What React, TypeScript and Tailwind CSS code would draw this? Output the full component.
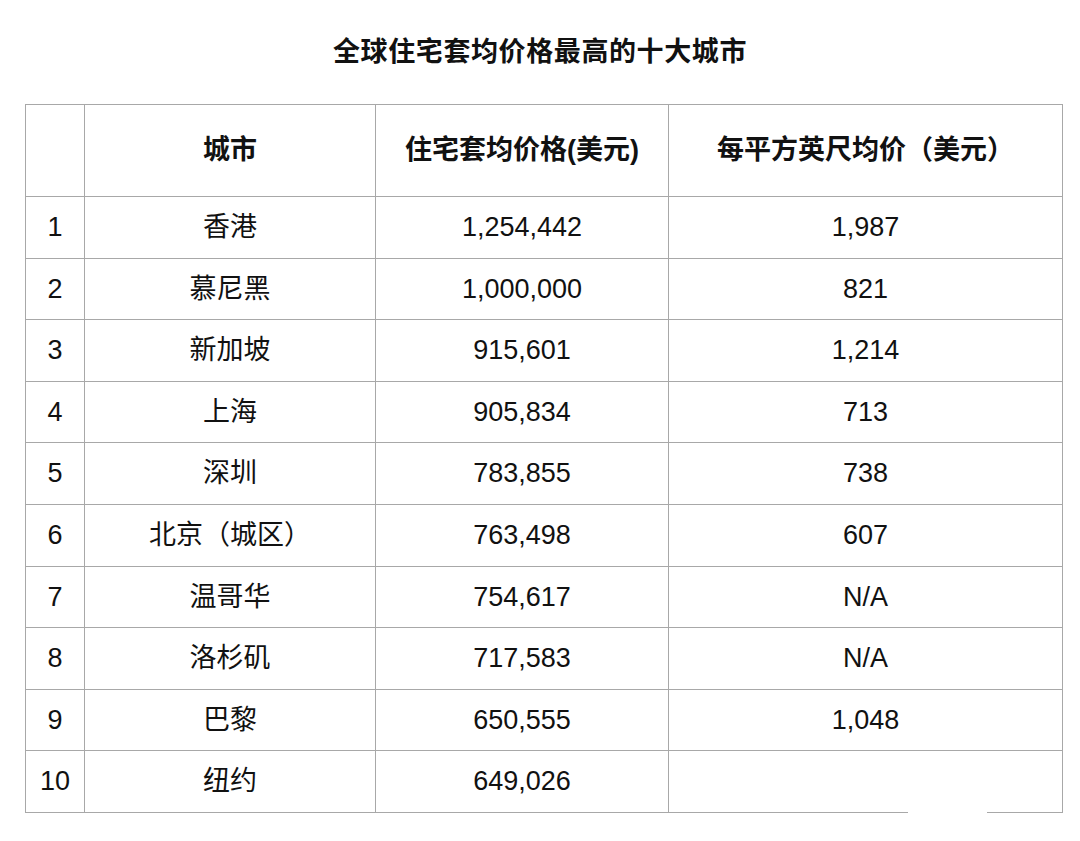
const rows: [string, string, string, string][] = [
  ["1", "香港", "1,254,442", "1,987"],
  ["2", "慕尼黑", "1,000,000", "821"],
  ["3", "新加坡", "915,601", "1,214"],
  ["4", "上海", "905,834", "713"],
  ["5", "深圳", "783,855", "738"],
  ["6", "北京（城区）", "763,498", "607"],
  ["7", "温哥华", "754,617", "N/A"],
  ["8", "洛杉矶", "717,583", "N/A"],
  ["9", "巴黎", "650,555", "1,048"],
  ["10", "纽约", "649,026", ""],
];

export default function App() {
  return (
    <div
      className="w-[1080px] h-[841px] bg-white text-[#111] pt-[35px]"
      style={{ fontFamily: '"Liberation Sans", "Noto Sans CJK SC", sans-serif' }}
    >
      <h1 className="text-center text-[27px] leading-[35px] font-bold tracking-[0.6px] mb-[34px]">
        全球住宅套均价格最高的十大城市
      </h1>
      <div className="pl-[25px]">
        <div className="relative w-[1037px]">
          <table className="w-[1037px] table-fixed border-collapse text-[27px]">
            <colgroup>
              <col className="w-[59px]" />
              <col className="w-[291px]" />
              <col className="w-[293px]" />
              <col className="w-[394px]" />
            </colgroup>
            <thead>
              <tr className="h-[92px]">
                <th className="border-[1.5px] border-[#a8a8a8]" />
                <th className="border-[1.5px] border-[#a8a8a8] font-bold">城市</th>
                <th className="border-[1.5px] border-[#a8a8a8] font-bold">住宅套均价格(美元)</th>
                <th className="border-[1.5px] border-[#a8a8a8] font-bold">每平方英尺均价（美元）</th>
              </tr>
            </thead>
            <tbody>
              {rows.map((r) => (
                <tr key={r[0]} className="h-[61.6px]">
                  <td className="border-[1.5px] border-[#a8a8a8] text-center">{r[0]}</td>
                  <td className="border-[1.5px] border-[#a8a8a8] text-center">{r[1]}</td>
                  <td className="border-[1.5px] border-[#a8a8a8] text-center">{r[2]}</td>
                  <td className="border-[1.5px] border-[#a8a8a8] text-center">{r[3]}</td>
                </tr>
              ))}
            </tbody>
          </table>
          {/* erased patch on the bottom rule */}
          <span className="absolute bottom-[-2px] left-[883px] h-[5px] w-[79px] bg-white" />
        </div>
      </div>
    </div>
  );
}
